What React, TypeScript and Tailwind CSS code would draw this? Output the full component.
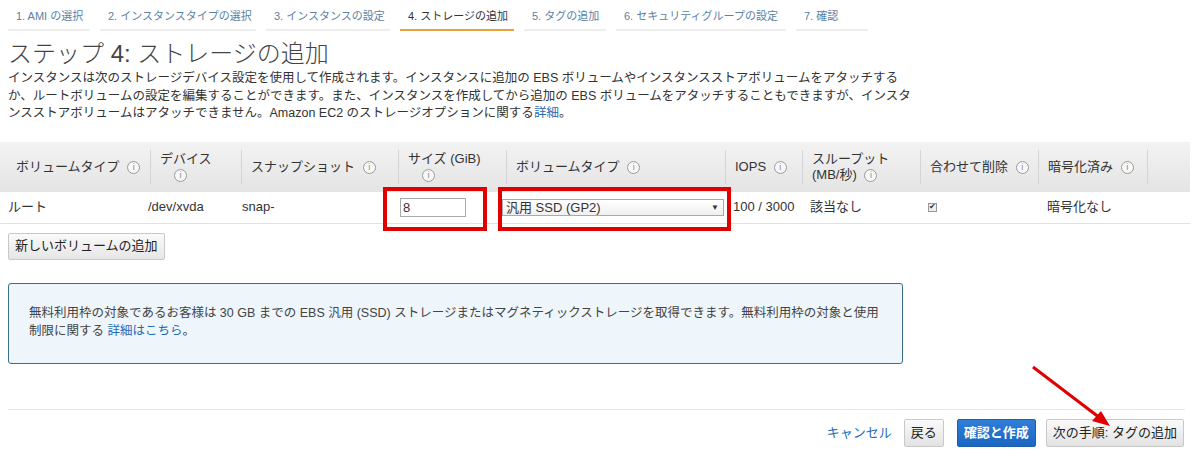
import React from "react";

const font = {
  fontFamily: '"Liberation Sans", "Noto Sans CJK JP", sans-serif',
};

const tabs = [
  { label: "1. AMI の選択", w: "w-[82px]" },
  { label: "2. インスタンスタイプの選択", w: "w-[156px]" },
  { label: "3. インスタンスの設定", w: "w-[124px]" },
  { label: "4. ストレージの追加", w: "w-[114px]", active: true },
  { label: "5. タグの追加", w: "w-[82px]" },
  { label: "6. セキュリティグループの設定", w: "w-[170px]" },
  { label: "7. 確認", w: "w-[72px]" },
];

function Info() {
  return (
    <span className="inline-flex items-center justify-center w-[13px] h-[13px] rounded-full border border-[#9a9a9a] text-[9px] leading-none text-[#888] align-middle ml-1 bg-[#f8f8f8]">
      i
    </span>
  );
}

function HeadCell({
  w,
  children,
  first,
}: {
  w: string;
  children: React.ReactNode;
  first?: boolean;
}) {
  return (
    <div className={`${w} h-full flex items-center relative`}>
      {!first && (
        <div className="absolute left-0 top-[8px] bottom-[8px] w-px bg-[#d4d4d4]" />
      )}
      <div className={`${first ? "pl-4" : "pl-[10px]"} text-[13px] leading-[16px] text-[#333]`}>
        {children}
      </div>
    </div>
  );
}

export default function App() {
  return (
    <div className="w-[1200px] h-[471px] bg-white relative overflow-hidden" style={font}>
      {/* wizard tabs */}
      <div className="flex gap-[10px] pl-2 pt-[9px]">
        {tabs.map((t) => (
          <div
            key={t.label}
            className={`${t.w} h-[22px] pl-2 text-[11px] leading-[14px] border-b-2 ${
              t.active ? "border-[#e8a33d] text-[#333]" : "border-[#eeeeee] text-[#5b7fa6]"
            }`}
          >
            {t.label}
          </div>
        ))}
      </div>

      <div className="px-2">
        <h1 className="text-[24px] leading-[30px] text-[#444] font-light mt-[8px]">
          ステップ 4: ストレージの追加
        </h1>
        <div className="text-[12.5px] leading-[17.5px] text-[#333] mt-[1px]">
          <div className="whitespace-nowrap">
            インスタンスは次のストレージデバイス設定を使用して作成されます。インスタンスに追加の EBS ボリュームやインスタンスストアボリュームをアタッチする
          </div>
          <div className="whitespace-nowrap">
            か、ルートボリュームの設定を編集することができます。また、インスタンスを作成してから追加の EBS ボリュームをアタッチすることもできますが、インスタ
          </div>
          <div className="whitespace-nowrap">
            ンスストアボリュームはアタッチできません。Amazon EC2 のストレージオプションに関する
            <span className="text-[#1f6bb5]">詳細</span>。
          </div>
        </div>
      </div>

      {/* table */}
      <div className="mt-[19px] w-[1190px]">
        <div className="h-[50px] flex bg-gradient-to-b from-[#f3f3f3] to-[#e4e4e4]">
          <HeadCell w="w-[150px]" first>
            ボリュームタイプ <Info />
          </HeadCell>
          <HeadCell w="w-[91px]">
            デバイス
            <div className="pl-[10px]">
              <Info />
            </div>
          </HeadCell>
          <HeadCell w="w-[157px]">
            スナップショット <Info />
          </HeadCell>
          <HeadCell w="w-[108px]">
            サイズ (GiB)
            <div className="pl-[10px]">
              <Info />
            </div>
          </HeadCell>
          <HeadCell w="w-[219px]">
            ボリュームタイプ <Info />
          </HeadCell>
          <HeadCell w="w-[77px]">
            IOPS <Info />
          </HeadCell>
          <HeadCell w="w-[118px]">
            スループット
            <br />
            (MB/秒) <Info />
          </HeadCell>
          <HeadCell w="w-[118px]">
            合わせて削除 <Info />
          </HeadCell>
          <HeadCell w="w-[109px]">
            暗号化済み <Info />
          </HeadCell>
          <HeadCell w="flex-1">{""}</HeadCell>
        </div>
        <div className="h-[32px] flex items-center border-b border-[#e2e2e2] text-[13px] text-[#333]">
          <div className="w-[148px] pl-2">ルート</div>
          <div className="w-[94px]">/dev/xvda</div>
          <div className="w-[158px]">snap-</div>
          <div className="w-[102px]">
            <div className="w-[66px] h-[19px] border border-[#a9a9a9] text-[13px] leading-[17px] pl-[2px] bg-white">
              8
            </div>
          </div>
          <div className="w-[231px]">
            <div className="w-[222px] h-[17px] border border-[#a9a9a9] bg-gradient-to-b from-white to-[#f0f0f0] flex items-center justify-between pl-[3px] pr-[4px] text-[13px] leading-[15px]">
              <span>汎用 SSD (GP2)</span>
              <span className="text-[8px]">▼</span>
            </div>
          </div>
          <div className="w-[77px]">100 / 3000</div>
          <div className="w-[118px]">該当なし</div>
          <div className="w-[119px]">
            <div className="w-[9px] h-[9px] border border-[#999] bg-[#eee] flex items-center justify-center text-[8px] leading-none">
              ✔
            </div>
          </div>
          <div>暗号化なし</div>
        </div>
      </div>

      <div className="px-2 mt-[9px]">
        <button className="h-[27px] px-[6px] text-[13px] text-[#222] border border-[#c8c8c8] rounded-[2px] bg-gradient-to-b from-[#fafafa] to-[#e6e6e6]">
          新しいボリュームの追加
        </button>
      </div>

      <div className="mx-2 mt-[23px] w-[895px] h-[81px] rounded-[3px] border border-[#3a6f8c] bg-[#eef5fb] pl-5 pt-[20px] text-[12.5px] leading-[18px] text-[#444]">
        <div className="whitespace-nowrap">
          無料利用枠の対象であるお客様は 30 GB までの EBS 汎用 (SSD) ストレージまたはマグネティックストレージを取得できます。無料利用枠の対象と使用
        </div>
        <div>
          制限に関する <span className="text-[#1f6bb5]">詳細はこちら</span>。
        </div>
      </div>

      <div className="mx-2 mt-[45px] h-px bg-[#e6e6e6] w-[1177px]" />

      <div className="flex items-center justify-end pr-4 mt-[9px]">
        <span className="text-[13px] text-[#1f6bb5]">キャンセル</span>
        <button className="ml-[12px] h-[28px] px-[6px] text-[13px] text-[#222] border border-[#c8c8c8] rounded-[2px] bg-gradient-to-b from-[#fafafa] to-[#e3e3e3]">
          戻る
        </button>
        <button className="ml-[13px] h-[28px] px-[6px] text-[13px] font-bold text-white border border-[#1f5fa8] rounded-[2px] bg-gradient-to-b from-[#2f7ed8] to-[#1a66c2]">
          確認と作成
        </button>
        <button className="ml-[10px] h-[28px] px-[6px] text-[13px] text-[#222] border border-[#c8c8c8] rounded-[2px] bg-gradient-to-b from-[#fafafa] to-[#e3e3e3]">
          次の手順: タグの追加
        </button>
      </div>

      {/* annotation boxes */}
      <div className="absolute left-[383px] top-[187px] w-[104px] h-[44px] border-[4px] border-[#e00000]" />
      <div className="absolute left-[498px] top-[187px] w-[233px] h-[44px] border-[4px] border-[#e00000]" />
      <svg className="absolute left-0 top-0" width="1200" height="471">
        <line x1="1033" y1="367" x2="1100" y2="418" stroke="#e00000" strokeWidth="3" />
        <polygon points="1110,426 1092,421 1101,411" fill="#e00000" />
      </svg>
    </div>
  );
}
